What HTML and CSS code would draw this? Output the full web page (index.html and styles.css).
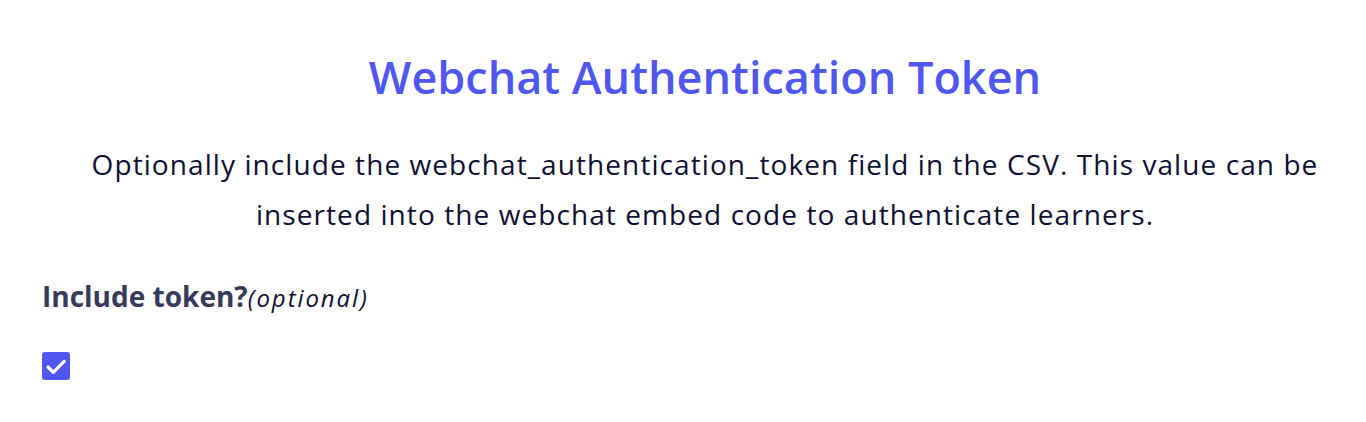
FILE: index.html
```html
<!DOCTYPE html>
<html lang="en">
<head>
<meta charset="utf-8">
<link rel="stylesheet" href="styles.css">
<title>Webchat Authentication Token</title>
</head>
<body>
<section class="panel">
  <h2 class="title">Webchat Authentication Token</h2>
  <p class="desc">Optionally include the webchat_authentication_token field in the CSV. This value can be<br> inserted into the webchat embed code to authenticate learners.</p>
  <div class="field">
    <label class="label" for="tok">Include token?<span class="opt">(optional)</span></label>
    <span class="check" id="tok" role="checkbox" aria-checked="true">
      <svg viewBox="0 0 28 28" width="28" height="28"><path d="M6 15 L11.3 20.3 L22.2 9.4" fill="none" stroke="#fff" stroke-width="3.2" stroke-linecap="round" stroke-linejoin="round"/></svg>
    </span>
  </div>
</section>
</body>
</html>
```
FILE: styles.css
```css
* { box-sizing: border-box; }
html, body { margin: 0; padding: 0; background: #fff; }
body { font-family: "Open Sans", "Lato", sans-serif; overflow: hidden; }
.panel { padding-top: 47px; }
.title {
  margin: 0;
  padding-left: 44px;
  text-align: center;
  color: #4f57ef;
  font-size: 45px;
  font-weight: 600;
  line-height: 60px;
}
.desc {
  margin: 32px 0 0;
  padding-left: 44px;
  text-align: center;
  color: #0d0f33;
  font-size: 28px;
  letter-spacing: 1.08px;
  line-height: 50px;
}
.field { padding-left: 42px; margin-top: 40px; }
.label {
  display: block;
  color: #383a5a;
  font-size: 28px;
  font-weight: 700;
  line-height: 34px;
}
.opt { font-size: 24px; letter-spacing: 1.9px; font-weight: 400; font-style: italic; color: #0d0f33; }
.check {
  display: flex;
  width: 28px;
  height: 28px;
  margin-top: 37px;
  border-radius: 3px;
  background: #4f57ef;
}
```
